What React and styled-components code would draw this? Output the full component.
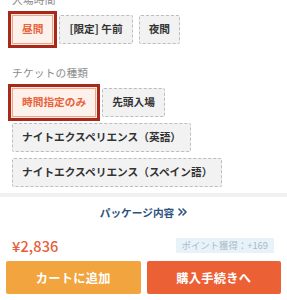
import React from "react";
import styled, { createGlobalStyle, css } from "styled-components";

const GlobalStyle = createGlobalStyle`
  html, body { margin: 0; padding: 0; background: #ffffff; }
  body {
    font-family: "Noto Sans CJK JP", "Noto Sans", "Liberation Sans", sans-serif;
    -webkit-font-smoothing: antialiased;
  }
`;

const Page = styled.div`
  width: 287px;
  height: 300px;
  overflow: hidden;
  display: flex;
  flex-direction: column;
  background: #fff;
`;

const Options = styled.div`
  margin-top: -8px;
  padding: 0 12px;
  display: flex;
  flex-direction: column;
`;

const Group = styled.section`
  display: flex;
  flex-direction: column;
  margin-top: ${(p) => (p.$first ? "0" : "21px")};
`;

const Label = styled.div`
  font-size: 10.7px;
  line-height: 15px;
  color: #8c8c8c;
  margin-bottom: 8px;
  letter-spacing: 0.2px;
`;

const ChipRow = styled.div`
  display: flex;
  flex-wrap: wrap;
  gap: 6px;
`;

const Chip = styled.button`
  box-sizing: border-box;
  height: 29px;
  padding: 0 9px;
  margin: 0;
  font-family: inherit;
  font-size: 10.7px;
  font-weight: 700;
  line-height: 1;
  color: #333;
  background: #f2f2f2;
  border: 1px dashed #bdbdbd;
  border-radius: 2px;
  white-space: nowrap;
  display: inline-flex;
  align-items: center;
  ${(p) =>
    p.$selected &&
    css`
      color: #e8653e;
      background: #fdf1eb;
      border: 1px solid #f0a68d;
      border-radius: 0;
      box-shadow: 0 0 0 1px #fbe5dc, 0 0 0 4px #a62a1c;
    `}
`;

const Separator = styled.div`
  height: 4px;
  margin-top: 6px;
  background: #f1f1f1;
`;

const PackageLink = styled.div`
  height: 30px;
  display: flex;
  align-items: center;
  justify-content: center;
  gap: 4px;
  font-size: 10.7px;
  font-weight: 700;
  color: #2f527e;
`;

const PriceRow = styled.div`
  height: 24px;
  margin-top: 6px;
  padding: 0 12px 0 12px;
  display: flex;
  align-items: center;
  justify-content: space-between;
`;

const Price = styled.div`
  font-size: 14.6px;
  font-weight: 500;
  color: #e5603b;
  letter-spacing: 0.1px;
`;

const PointBadge = styled.div`
  height: 15px;
  padding: 0 6px;
  margin-right: 1px;
  display: flex;
  align-items: center;
  font-size: 9.4px;
  color: #a9bac8;
  background: #e8f2f9;
`;

const ButtonRow = styled.div`
  display: grid;
  grid-template-columns: 1fr 1fr;
  gap: 6px;
  padding: 4px 6px 6px;
`;

const ActionButton = styled.button`
  height: 33px;
  border: none;
  border-radius: 2px;
  font-family: inherit;
  font-size: 12.2px;
  font-weight: 700;
  color: #fff;
  background: ${(p) => (p.$primary ? "#ec6035" : "#f2a43e")};
  letter-spacing: 0.3px;
`;

const DoubleChevron = () => (
  <svg width="9" height="8" viewBox="0 0 9 8" fill="none">
    <path
      d="M1 1l3 3-3 3M5 1l3 3-3 3"
      stroke="#2f527e"
      strokeWidth="1.6"
      strokeLinecap="round"
      strokeLinejoin="round"
    />
  </svg>
);

const timeOptions = [
  { label: "昼間", selected: true },
  { label: "[限定] 午前" },
  { label: "夜間" },
];

const ticketOptions = [
  { label: "時間指定のみ", selected: true },
  { label: "先頭入場" },
  { label: "ナイトエクスペリエンス（英語）" },
  { label: "ナイトエクスペリエンス（スペイン語）" },
];

export default function App() {
  return (
    <>
      <GlobalStyle />
      <Page>
        <Options>
          <Group $first>
            <Label>入場時間</Label>
            <ChipRow>
              {timeOptions.map((o) => (
                <Chip key={o.label} $selected={o.selected}>
                  {o.label}
                </Chip>
              ))}
            </ChipRow>
          </Group>
          <Group>
            <Label>チケットの種類</Label>
            <ChipRow>
              {ticketOptions.map((o) => (
                <Chip key={o.label} $selected={o.selected}>
                  {o.label}
                </Chip>
              ))}
            </ChipRow>
          </Group>
        </Options>
        <Separator />
        <PackageLink>
          パッケージ内容
          <DoubleChevron />
        </PackageLink>
        <PriceRow>
          <Price>¥2,836</Price>
          <PointBadge>ポイント獲得：+169</PointBadge>
        </PriceRow>
        <ButtonRow>
          <ActionButton>カートに追加</ActionButton>
          <ActionButton $primary>購入手続きへ</ActionButton>
        </ButtonRow>
      </Page>
    </>
  );
}
